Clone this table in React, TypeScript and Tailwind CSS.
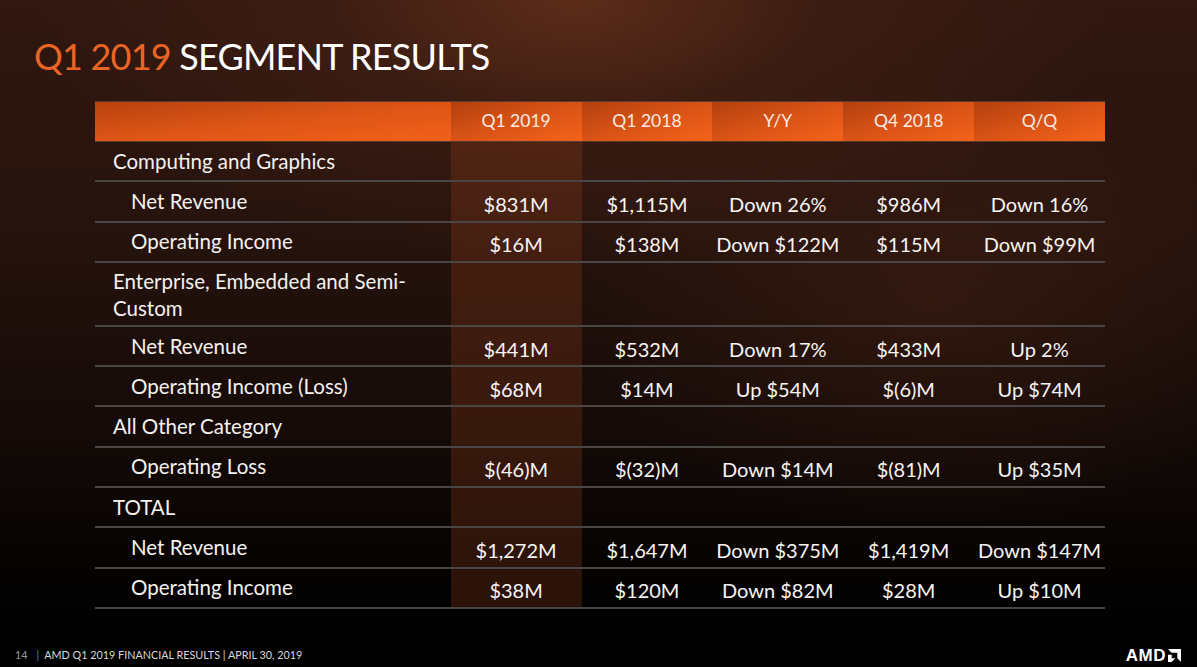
import React from 'react';

type Row = {
  label: string;
  indent?: boolean;
  tall?: boolean;
  values?: string[];
};

const columns = ['Q1 2019', 'Q1 2018', 'Y/Y', 'Q4 2018', 'Q/Q'];

const rows: Row[] = [
  { label: 'Computing and Graphics' },
  { label: 'Net Revenue', indent: true, values: ['$831M', '$1,115M', 'Down 26%', '$986M', 'Down 16%'] },
  { label: 'Operating Income', indent: true, values: ['$16M', '$138M', 'Down $122M', '$115M', 'Down $99M'] },
  { label: 'Enterprise, Embedded and Semi-Custom', tall: true },
  { label: 'Net Revenue', indent: true, values: ['$441M', '$532M', 'Down 17%', '$433M', 'Up 2%'] },
  { label: 'Operating Income (Loss)', indent: true, values: ['$68M', '$14M', 'Up $54M', '$(6)M', 'Up $74M'] },
  { label: 'All Other Category' },
  { label: 'Operating Loss', indent: true, values: ['$(46)M', '$(32)M', 'Down $14M', '$(81)M', 'Up $35M'] },
  { label: 'TOTAL' },
  { label: 'Net Revenue', indent: true, values: ['$1,272M', '$1,647M', 'Down $375M', '$1,419M', 'Down $147M'] },
  { label: 'Operating Income', indent: true, values: ['$38M', '$120M', 'Down $82M', '$28M', 'Up $10M'] },
];

const AmdLogo = () => (
  <div className="flex items-center gap-[2px] text-white">
    <span className="text-[17px] font-black leading-none tracking-[0.5px]" style={{ fontFamily: '"Liberation Sans", sans-serif' }}>
      AMD
    </span>
    <svg viewBox="0 0 100 100" className="h-[13px] w-[13px]" fill="currentColor">
      <path d="M0 0H100V100L72 72V28H28Z" />
      <path d="M0 100V44L18 44L28 44V72H56L28 100Z" />
    </svg>
  </div>
);

export default function App() {
  return (
    <div
      className="relative flex h-[667px] w-[1197px] flex-col overflow-hidden bg-[radial-gradient(ellipse_45%_40%_at_48%_0%,#5c2c19_0%,rgba(80,38,22,0.4)_45%,transparent_100%),radial-gradient(ellipse_30%_35%_at_78%_45%,rgba(70,34,20,0.45)_0%,transparent_100%),linear-gradient(to_bottom,#301710_0%,#26130d_35%,#140a07_65%,#030201_88%,#000_100%)] text-white"
      style={{ fontFamily: 'Lato, "Open Sans", sans-serif' }}
    >
      <h1 className="ml-[34px] mt-[34px] text-[36px] font-normal leading-[44px] tracking-[-0.8px]">
        <span className="text-[#ea6424]">Q1 2019</span> <span className="text-white">SEGMENT RESULTS</span>
      </h1>

      <div className="ml-[95px] mt-[23px] w-[1010px]">
        <div className="flex h-[41px] border-y border-[#5a3a2e] text-[17.5px]">
          <div className="w-[356px] bg-gradient-to-br from-[#b8420f] via-[#dd5516] to-[#f3611a]" />
          {columns.map((c) => (
            <div
              key={c}
              className="flex w-[131px] items-center justify-center bg-gradient-to-br from-[#b3400e] via-[#d95316] to-[#f5631a] text-[#f8ebe4]"
            >
              {c}
            </div>
          ))}
        </div>

        {rows.map((r, i) => (
          <div
            key={i}
            className={`flex border-b-[2px] border-[#4a4645] ${r.tall ? 'h-[64px]' : 'h-[40.3px]'}`}
          >
            <div
              className={`flex w-[356px] items-center text-[20.5px] leading-[27px] text-[#f4f1ef] ${r.indent ? 'pl-[36px]' : 'pl-[18px]'} ${r.tall ? 'pr-[20px]' : ''}`}
            >
              <span className={r.tall ? 'mt-[2px]' : 'mt-0'}>{r.label}</span>
            </div>
            {columns.map((c, j) => (
              <div
                key={c}
                className={`flex w-[131px] items-center justify-center pt-[5px] text-[20px] text-[#f7f4f2] ${j === 0 ? 'bg-[#8c3c1c]/30' : ''}`}
              >
                {r.values ? r.values[j] : ''}
              </div>
            ))}
          </div>
        ))}
      </div>

      <div className="mt-auto flex h-[30px] items-center justify-between bg-black pl-[15px] pr-[16px] pt-[6px]">
        <div className="flex items-center text-[10.8px] uppercase text-[#d8d8d8]">
          <span className="text-[#9a9a9a]">14</span>
          <span className="ml-[9px] mr-[5px] text-[#3d8fd8]">|</span>
          <span>AMD Q1 2019 Financial Results | April 30, 2019</span>
        </div>
        <AmdLogo />
      </div>
    </div>
  );
}
